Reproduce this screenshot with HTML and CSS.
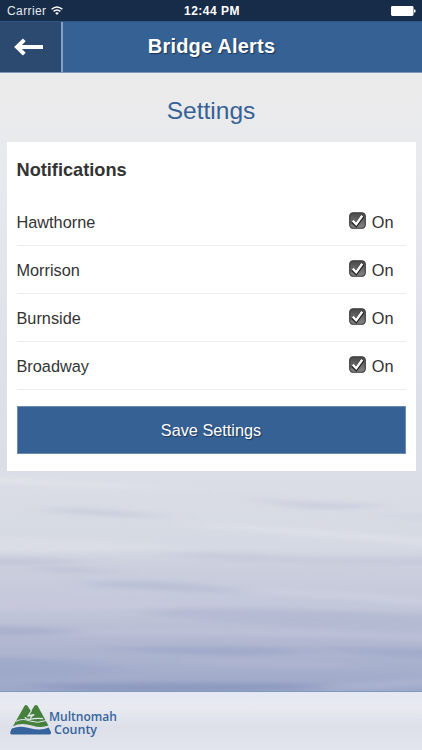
FILE: index.html
```
<!DOCTYPE html>
<html lang="en">
<head>
  <meta charset="UTF-8">
  <meta name="viewport" content="width=device-width, initial-scale=1.0">
  <title>Bridge Alerts</title>
  <link rel="stylesheet" href="styles.css">
</head>
<body>
  <!-- water background -->
  <svg class="water" viewBox="0 0 422 750" preserveAspectRatio="none" aria-hidden="true">
    <defs>
      <linearGradient id="waterFill" x1="0" y1="0" x2="0" y2="1">
        <stop offset="0.1" stop-color="#ebebeb"/>
        <stop offset="0.25" stop-color="#e8e9ee"/>
        <stop offset="0.45" stop-color="#dfe1eb"/>
        <stop offset="0.63" stop-color="#dbdee6"/>
        <stop offset="0.73" stop-color="#d5d9e3"/>
        <stop offset="0.76" stop-color="#cacedd"/>
        <stop offset="0.81" stop-color="#c3c7da"/>
        <stop offset="0.86" stop-color="#b0b7d0"/>
        <stop offset="0.925" stop-color="#9ca7c8"/>
      </linearGradient>
      <filter id="soft" x="-20%" y="-100%" width="140%" height="300%">
        <feGaussianBlur stdDeviation="16 2"/>
      </filter>
    </defs>
    <rect width="422" height="750" fill="url(#waterFill)"/>
    <g filter="url(#soft)" opacity="0.7">
      <path d="M-40 475Q100 482 190 490Q90 488-40 481Z" fill="#e4e5ea"/>
      <path d="M225 494Q290 504 385 504Q350 512 300 508Z" fill="#c4c9d9"/>
      <path d="M350 512Q400 516 470 525L470 519Z" fill="#c8ccda"/>
      <path d="M50 508Q110 508 170 518Q110 517 50 511Z" fill="#bfc6d6"/>
      <path d="M200 524Q300 527 470 543L470 548Q300 534 200 527Z" fill="#e0e3ea"/>
      <path d="M-40 538Q80 536 190 548Q80 554-40 551Z" fill="#dcdfe6"/>
      <path d="M-40 558Q40 556 90 562Q40 566-40 566Z" fill="#c0c3d6"/>
      <path d="M160 555Q220 550 280 556Q350 560 470 556L470 566Q300 565 210 560Z" fill="#c4c7d9"/>
      <path d="M90 582Q180 578 250 594Q160 590 90 586Z" fill="#b3bad3"/>
      <path d="M40 567Q80 567 115 573Q80 573 40 570Z" fill="#b5bad0"/>
      <path d="M-40 594Q100 598 240 606Q120 612-40 610Z" fill="#c8c8dc"/>
      <path d="M250 588Q330 588 470 602L470 608Q330 598 250 593Z" fill="#cdd0e0"/>
      <path d="M150 609Q260 606 470 617L470 631Q270 630 150 615Z" fill="#b0b8d0"/>
      <path d="M-40 626Q40 626 80 631Q40 637-40 635Z" fill="#a4acca"/>
      <path d="M80 635Q230 632 470 642L470 638Q260 626 80 631Z" fill="#c0c4da"/>
      <path d="M90 649Q210 643 320 650Q260 658 190 654Z" fill="#9ca6c9"/>
      <path d="M330 646Q390 650 470 648L470 661Q370 655 330 650Z" fill="#9fa7ca"/>
      <path d="M-40 657Q60 656 130 670Q60 682-40 680Z" fill="#9ca7ca"/>
      <path d="M190 659Q290 656 380 667Q280 669 190 664Z" fill="#b1b6d2"/>
      <path d="M20 685Q200 680 330 685Q280 695 90 692Z" fill="#8794bd"/>
      <path d="M330 684Q390 682 470 674L470 681Q380 690 330 690Z" fill="#b0b6d2"/>
    </g>
  </svg>

  <div class="app">
    <div class="status-bar">
      <div class="carrier">
        Carrier
        <svg class="wifi" viewBox="0 0 12 9">
          <path d="M0.6 3.3Q6-1.3 11.4 3.3M2.6 5.4Q6 2.5 9.4 5.4" fill="none" stroke="#fff" stroke-width="1.5"/>
          <path d="M4.2 6.9Q6 5.4 7.8 6.9L6 8.9Z" fill="#fff"/>
        </svg>
      </div>
      <div class="clock">12:44 PM</div>
      <svg class="battery" viewBox="0 0 25 10">
        <rect width="22.5" height="10" rx="1.4" fill="#fff"/>
        <path d="M23 3.2Q24.7 3.4 24.7 5Q24.7 6.6 23 6.8Z" fill="#fff"/>
      </svg>
    </div>

    <header class="header">
      <a class="back" href="#" aria-label="Back">
        <svg class="arrow" viewBox="0 0 30 18">
          <path d="M29 9H3M10.3 1.8L3 9L10.3 16.2" fill="none" stroke="#fff" stroke-width="4"/>
        </svg>
      </a>
      <h1>Bridge Alerts</h1>
    </header>

    <main class="content">
      <h2>Settings</h2>
      <form class="panel">
        <h3>Notifications</h3>
        <label class="row">
          <span>Hawthorne</span>
          <span class="toggle"><svg class="check" viewBox="0 0 17 17"><use href="#checkmark"/></svg>On</span>
        </label>
        <label class="row">
          <span>Morrison</span>
          <span class="toggle"><svg class="check" viewBox="0 0 17 17"><use href="#checkmark"/></svg>On</span>
        </label>
        <label class="row">
          <span>Burnside</span>
          <span class="toggle"><svg class="check" viewBox="0 0 17 17"><use href="#checkmark"/></svg>On</span>
        </label>
        <label class="row">
          <span>Broadway</span>
          <span class="toggle"><svg class="check" viewBox="0 0 17 17"><use href="#checkmark"/></svg>On</span>
        </label>
        <button type="button" class="save">Save Settings</button>
      </form>
    </main>

    <footer class="footer">
      <svg class="logo" viewBox="0 0 110 36">
        <path d="M3 22.2L14.4 2Q16 0 17.6 2L21 7.2L24.3 2Q26 0 27.7 2L38.4 21.6Q31 24.5 22 21.5Q11 18 3 22.2Z" fill="#45803d"/>
        <path d="M21.6 6.5L17.6 12.5Q21 10.5 24.2 10.6Q20.5 12 20.6 14.4M14.8 13.2Q16 15.8 21 15.2Q25 14 33 14.6" fill="none" stroke="#e5e8f1" stroke-width="1.2"/>
        <path d="M6 17.4Q12 13.8 20 17Q27 19.8 36 16.6" fill="none" stroke="#e5e8f1" stroke-width="1"/>
        <path d="M1.8 24.6Q10 21 20 24.2Q31 27.2 38.7 23.6L41 28Q41.4 30.6 39.5 30.6H1.5Q0 30.6 .3 28Z" fill="#36649c"/>
        <text x="39" y="17.4" textLength="68" lengthAdjust="spacingAndGlyphs">Multnomah</text>
        <text x="44" y="30.4" textLength="43" lengthAdjust="spacingAndGlyphs">County</text>
      </svg>
    </footer>
  </div>

  <!-- shared checkbox shape -->
  <svg class="defs" width="0" height="0">
    <defs>
      <linearGradient id="boxFill" x1="0" y1="0" x2="0" y2="1">
        <stop offset="0" stop-color="#484848"/>
        <stop offset="1" stop-color="#858585"/>
      </linearGradient>
      <g id="checkmark">
        <rect x="0.7" y="0.7" width="15.6" height="15.6" rx="3.6" fill="url(#boxFill)" stroke="#383838" stroke-width="1.1"/>
        <path d="M3.4 9.2L7.2 12.8L13.6 3.8" fill="none" stroke="#222" stroke-width="4"/>
        <path d="M3.8 8.6L7.2 12.2L13.2 3.8" fill="none" stroke="#fff" stroke-width="2.4"/>
      </g>
    </defs>
  </svg>
</body>
</html>
```
FILE: styles.css
```
* {
  box-sizing: border-box;
}

body {
  margin: 0;
  font-family: "Liberation Sans", Helvetica, Arial, sans-serif;
  font-size: 16.3px;
  color: #333;
  background-color: #dfe1eb;
}

/* sits behind the whole app */
.water {
  position: absolute;
  top: 0;
  left: 0;
  width: 100%;
  height: 100vh;
  z-index: -1;
}

.defs {
  position: absolute;
}

.app {
  display: flex;
  flex-direction: column;
  height: 100vh;
  overflow: hidden;
}

.status-bar {
  display: grid;
  grid-template-columns: 1fr auto 1fr;
  align-items: center;
  height: 21px;
  padding: 1px 6px 0 7px;
  background-color: #172c49;
  color: #fff;
  font-size: 12px;
}

.carrier {
  display: flex;
  align-items: center;
  gap: 5px;
  letter-spacing: 0.4px;
  color: #e3e8ef;
}

.wifi {
  width: 12px;
  height: 9px;
  margin-top: -2px;
}

.clock {
  font-weight: bold;
  letter-spacing: 0.5px;
  padding-left: 1px;
}

.battery {
  width: 25px;
  height: 10px;
  justify-self: end;
  margin-top: -1px;
}

.header {
  display: flex;
  height: 52px;
  background-color: #366195;
  border-top: 1px solid #2d5686;
  border-bottom: 1px solid #7b98bb;
}

.back {
  display: flex;
  align-items: center;
  width: 63px;
  padding-left: 14px;
  background-color: #2c4a70;
  border-right: 2px solid #86a1c4;
}

.arrow {
  width: 30px;
  height: 18px;
}

.header h1 {
  flex: 1;
  margin: 0;
  padding-right: 62px;
  text-align: center;
  font-size: 20px;
  line-height: 49px;
  letter-spacing: 0.2px;
  color: #fff;
  text-shadow: 1px 1px 1px #1c3453;
}

.content {
  flex: 1;
  padding: 0 6.5px;
}

.content h2 {
  margin: 0;
  padding-top: 23px;
  text-align: center;
  font-size: 24.5px;
  font-weight: normal;
  line-height: 30px;
  padding-bottom: 16px;
  color: #366195;
}

.panel {
  height: 329px;
  padding: 17px 10px;
  background-color: #fff;
}

.panel h3 {
  margin: 0 0 17px;
  font-size: 18.2px;
  line-height: 22px;
}

.row {
  display: flex;
  justify-content: space-between;
  align-items: center;
  height: 48px;
  padding: 1px 12px 0 0;
  border-bottom: 1px solid #ececec;
}

.toggle {
  display: flex;
  align-items: center;
  gap: 6px;
}

.check {
  width: 17px;
  height: 17px;
  margin-top: -3px;
}

.save {
  display: block;
  width: 100%;
  height: 48px;
  margin-top: 16px;
  border: 1px solid #6b8db5;
  background-color: #366195;
  font-family: inherit;
  font-size: 16.3px;
  color: #fff;
  text-shadow: 1px 1px 1px #1c3453;
}

.footer {
  height: 59px;
  padding: 12px 0 0 10px;
  border-top: 1px solid #8298be;
  background: linear-gradient(#e4e8f1, #e8eaf0 25%, #dde0ea 60%, #e2e5ed);
}

.logo {
  display: block;
  width: 110px;
  height: 36px;
}

.logo text {
  font-family: "Open Sans", "Noto Sans", sans-serif;
  font-size: 12.5px;
  font-weight: 600;
  fill: #36649c;
}
```
